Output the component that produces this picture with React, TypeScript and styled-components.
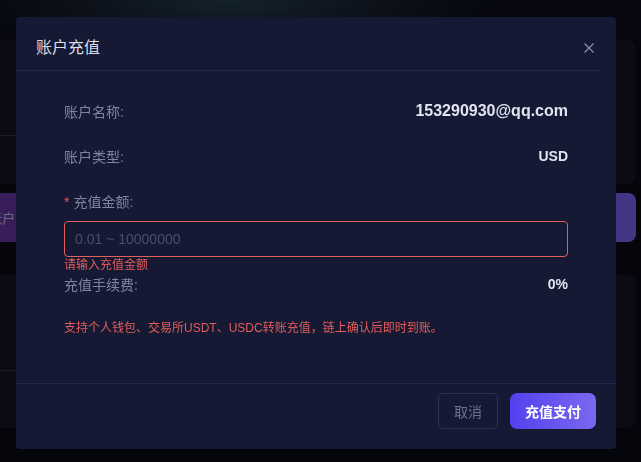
import React from "react";
import styled, { createGlobalStyle } from "styled-components";

const Global = createGlobalStyle`
  html, body { margin: 0; padding: 0; }
  body {
    background: #05060b;
    font-family: "Liberation Sans", "Noto Sans CJK SC", sans-serif;
    overflow: hidden;
  }
  * { box-sizing: border-box; }
`;

const Page = styled.div`
  width: 641px;
  height: 462px;
  display: flex;
  flex-direction: column;
  background: #05060b;
`;

const TopBar = styled.div`
  height: 40px;
  flex: none;
  background: radial-gradient(ellipse 260px 60px at 36% 0%, #13222c 0%, #0c1019 60%, #07080f 100%);
`;

const Column = styled.div`
  display: flex;
  flex-direction: column;
  margin-left: -49px;
  margin-right: 5px;
`;

const Card = styled.div<{ $h: number; $line: number }>`
  height: ${(p) => p.$h}px;
  background: #0a0b14;
  border-radius: 8px;
  padding-top: ${(p) => p.$line}px;
`;

const CardLine = styled.div`
  width: 340px;
  border-top: 1px solid #1b1c28;
`;

const Banner = styled.div`
  height: 49px;
  margin: 9px 0 33px;
  border-radius: 8px;
  background: linear-gradient(90deg, #3a1c58 0%, #2f2560 50%, #433685 100%);
  display: flex;
  align-items: center;
  padding-left: 12px;
  color: #6e6a82;
  font-size: 13px;
`;

const Overlay = styled.div`
  position: fixed;
  inset: 0;
  padding: 17px 0 0 16px;
`;

const Modal = styled.div`
  width: 600px;
  background: #151934;
  border-radius: 4px;
  display: flex;
  flex-direction: column;
`;

const Header = styled.div`
  margin-right: 16px;
  padding: 20px 6px 11px 20px;
  border-bottom: 1px solid #242947;
  display: flex;
  align-items: center;
  justify-content: space-between;
`;

const Title = styled.div`
  font-size: 16px;
  line-height: 22px;
  font-weight: 400;
  color: #dcdeea;
`;

const Close = styled.button`
  width: 10px;
  height: 10px;
  padding: 0;
  border: none;
  background: none;
  display: flex;
  cursor: pointer;
`;

const Body = styled.div`
  padding: 29px 48px 46px;
  display: flex;
  flex-direction: column;
`;

const Row = styled.div<{ $mb?: number }>`
  height: 22px;
  display: flex;
  align-items: center;
  justify-content: space-between;
  margin-bottom: ${(p) => p.$mb ?? 0}px;
`;

const Label = styled.span`
  font-size: 14px;
  color: #80849e;
`;

const Value = styled.span<{ $size?: number }>`
  font-size: ${(p) => p.$size ?? 14}px;
  font-weight: 700;
  color: #e2e4ef;
`;

const FieldLabel = styled.div`
  height: 22px;
  line-height: 22px;
  font-size: 14px;
  color: #80849e;
  margin-bottom: 8px;
`;

const Star = styled.span`
  color: #e35a57;
  margin-right: 4px;
`;

const Input = styled.input`
  width: 100%;
  height: 36px;
  border: 1px solid #e0605d;
  border-radius: 4px;
  background: transparent;
  padding: 0 10px;
  font-family: inherit;
  font-size: 14px;
  color: #e2e4ef;
  outline: none;
  &::placeholder { color: #4a4f6a; }
`;

const ErrorText = styled.div`
  font-size: 12px;
  line-height: 16px;
  color: #e35d5a;
`;

const Note = styled.div`
  margin-top: 24px;
  font-size: 12px;
  line-height: 18px;
  color: #e35d5a;
`;

const Footer = styled.div`
  border-top: 1px solid #242947;
  padding: 9px 20px 20px;
  display: flex;
  justify-content: flex-end;
  gap: 12px;
`;

const Button = styled.button<{ $primary?: boolean }>`
  height: 36px;
  padding: 0 15px;
  border-radius: ${(p) => (p.$primary ? 7 : 4)}px;
  border: ${(p) => (p.$primary ? "none" : "1px solid #2c3150")};
  background: ${(p) => (p.$primary ? "linear-gradient(90deg, #5441ef 0%, #7a68f0 100%)" : "transparent")};
  color: ${(p) => (p.$primary ? "#ffffff" : "#6c7090")};
  font-family: inherit;
  font-size: 14px;
  font-weight: ${(p) => (p.$primary ? 600 : 400)};
  cursor: pointer;
`;

export default function App() {
  return (
    <>
      <Global />
      <Page>
        <TopBar />
        <Column>
          <Card $h={144} $line={95}>
            <CardLine />
          </Card>
          <Banner>我的账户</Banner>
          <Card $h={153} $line={95}>
            <CardLine />
          </Card>
        </Column>
      </Page>
      <Overlay>
        <Modal>
          <Header>
            <Title>账户充值</Title>
            <Close aria-label="关闭">
              <svg width="10" height="10" viewBox="0 0 10 10">
                <path d="M0.5 0.5 L9.5 9.5 M9.5 0.5 L0.5 9.5" stroke="#8b90a8" strokeWidth="1.2" fill="none" />
              </svg>
            </Close>
          </Header>
          <Body>
            <Row $mb={23}>
              <Label>账户名称:</Label>
              <Value $size={16}>153290930@qq.com</Value>
            </Row>
            <Row $mb={24}>
              <Label>账户类型:</Label>
              <Value>USD</Value>
            </Row>
            <FieldLabel>
              <Star>*</Star>充值金额:
            </FieldLabel>
            <Input placeholder="0.01 ~ 10000000" />
            <ErrorText>请输入充值金额</ErrorText>
            <Row>
              <Label>充值手续费:</Label>
              <Value>0%</Value>
            </Row>
            <Note>支持个人钱包、交易所USDT、USDC转账充值，链上确认后即时到账。</Note>
          </Body>
          <Footer>
            <Button>取消</Button>
            <Button $primary>充值支付</Button>
          </Footer>
        </Modal>
      </Overlay>
    </>
  );
}
